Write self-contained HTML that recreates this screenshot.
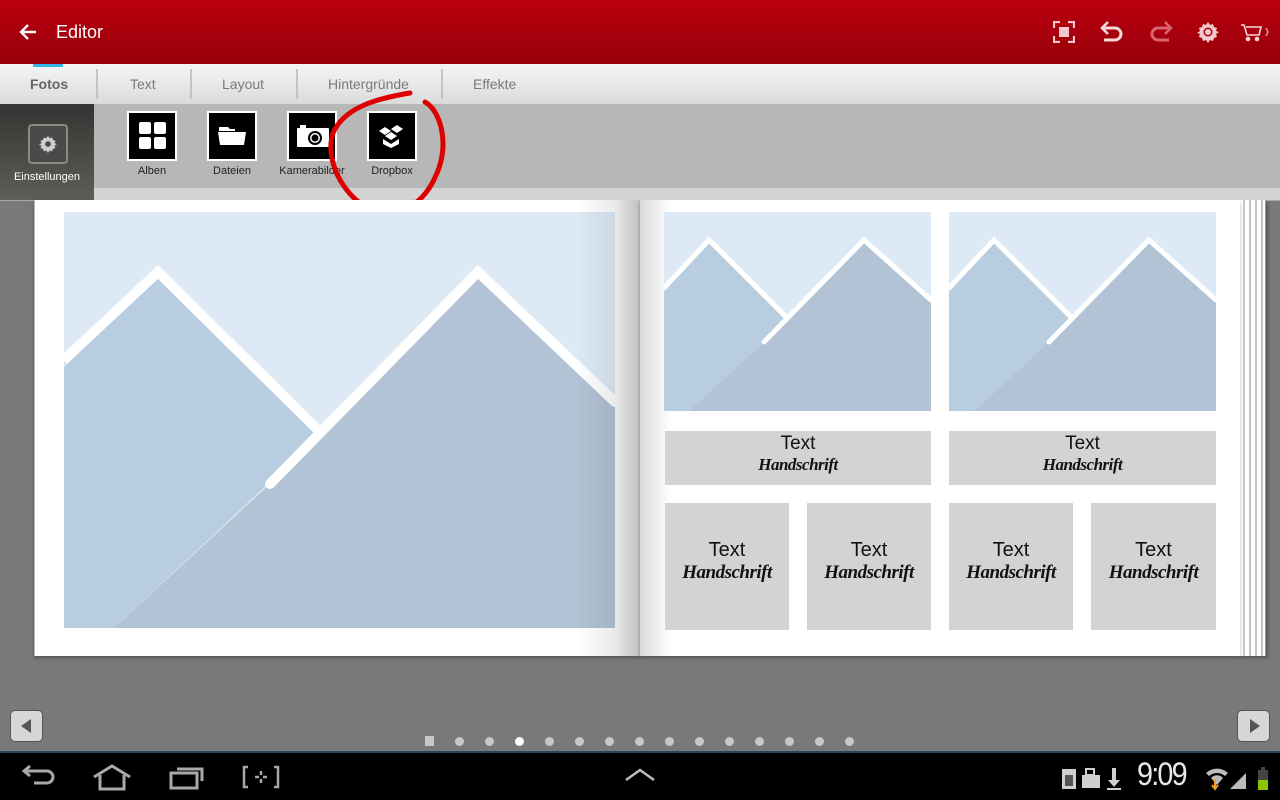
<!DOCTYPE html>
<html><head><meta charset="utf-8"><style>
*{margin:0;padding:0;box-sizing:border-box}
body{width:1280px;height:800px;overflow:hidden;background:#797979;font-family:"Liberation Sans",sans-serif;position:relative}
.abs{position:absolute}
#hdr{left:0;top:0;width:1280px;height:64px;background:linear-gradient(#bb0010,#960008)}
#tabs{left:0;top:64px;width:1280px;height:40px;background:linear-gradient(#f4f5f5,#dadbdb)}
.tab{position:absolute;top:12px;font-size:14px;color:#7a7a7a}
.sep{position:absolute;top:5px;width:2px;height:30px;background:#c4c4c4}
#tool{left:0;top:104px;width:1280px;height:84px;background:#b7b7b7}
#strip{left:0;top:188px;width:1280px;height:13px;background:#d3d3d3;border-bottom:1px solid #a9a9a9}
.ib{position:absolute;top:111px;width:50px;height:50px;background:#000;border:2px solid #fff}
.il{position:absolute;top:165px;font-size:11px;color:#222;text-align:center;width:90px}
.page{background:#fff}
.tb{position:absolute;background:#d3d3d3;text-align:center;color:#111}
.t{font-size:20px}
.h{font-family:"Liberation Serif",serif;font-style:italic;font-weight:bold;font-size:19px;letter-spacing:-0.5px}
.dot{position:absolute;top:737px;width:9px;height:9px;border-radius:50%;background:#c8c8c8}
</style></head><body>
<div id="hdr" class="abs">
<svg class="abs" style="left:18px;top:22px" width="20" height="20" viewBox="0 0 20 20"><path d="M18 10H3M10 3L3 10l7 7" stroke="#fff" stroke-width="2.4" fill="none"/></svg>
<div class="abs" style="left:56px;top:22px;color:#fff;font-size:18px">Editor</div>
<svg class="abs" style="left:1053px;top:21px" width="22" height="22" viewBox="0 0 22 22" fill="none" stroke="#f2c8cc" stroke-width="2.2"><path d="M1 7V1h6M15 1h6v6M21 15v6h-6M7 21H1v-6"/><rect x="6" y="6" width="10" height="10" fill="#f2c8cc" stroke="none"/></svg>
<svg class="abs" style="left:1099px;top:21px" width="26" height="22" viewBox="0 0 26 22" fill="none" stroke="#f4d8da" stroke-width="3"><path d="M4 7h12a6 6 0 010 12H5"/><path d="M9 1L3 7l6 6" stroke-width="2.6"/></svg>
<svg class="abs" style="left:1148px;top:21px" width="26" height="22" viewBox="0 0 26 22" fill="none" stroke="#d8646e" stroke-width="3"><path d="M22 7H10a6 6 0 000 12h11"/><path d="M17 1l6 6-6 6" stroke-width="2.6"/></svg>
<svg class="abs" style="left:1197px;top:21px" width="22" height="22" viewBox="0 0 22 22"><path d="M11 1l2 3 3-1 1 3 3 1-1 3 3 1-3 2 1 3-3 1-1 3-3-1-2 3-2-3-3 1-1-3-3-1 1-3-3-1 3-2-1-3 3-1 1-3 3 1z" fill="#f2c8cc"/><circle cx="11" cy="11" r="4.5" fill="#a8000c"/><circle cx="11" cy="11" r="3" fill="#f2c8cc"/></svg>
<svg class="abs" style="left:1240px;top:23px" width="30" height="20" viewBox="0 0 30 20" fill="none" stroke="#f4d8da" stroke-width="1.6"><path d="M1 2h3l3 10h12l2-8H6"/><circle cx="8" cy="16" r="1.5" fill="#f4d8da"/><circle cx="17" cy="16" r="1.5" fill="#f4d8da"/><path d="M26 5l2 4-2 4" stroke="#d88890"/></svg>
</div>
<div id="tabs" class="abs">
<div class="abs" style="left:33px;top:0;width:30px;height:3px;background:#33b5e5"></div>
<div class="tab" style="left:30px;font-weight:bold;color:#666">Fotos</div>
<div class="sep" style="left:96px"></div>
<div class="tab" style="left:130px">Text</div>
<div class="sep" style="left:190px"></div>
<div class="tab" style="left:222px">Layout</div>
<div class="sep" style="left:296px"></div>
<div class="tab" style="left:328px">Hintergründe</div>
<div class="sep" style="left:441px"></div>
<div class="tab" style="left:473px">Effekte</div>
</div>
<div id="tool" class="abs"></div>
<div id="strip" class="abs"></div>
<div class="abs" style="left:0;top:104px;width:94px;height:96px;background:linear-gradient(#343432,#5e5d59)">
<div class="abs" style="left:28px;top:20px;width:40px;height:40px;border:2px solid #8a8a86;border-radius:4px;background:#4a4a48"></div>
<svg class="abs" style="left:39px;top:31px" width="18" height="18" viewBox="0 0 22 22"><path d="M11 1l2 3 3-1 1 3 3 1-1 3 3 1-3 2 1 3-3 1-1 3-3-1-2 3-2-3-3 1-1-3-3-1 1-3-3-1 3-2-1-3 3-1 1-3 3 1z" fill="#cfcfcf"/><circle cx="11" cy="11" r="3.5" fill="#4a4a48"/></svg>
<div class="abs" style="left:0;top:67px;width:94px;text-align:center;color:#fff;font-size:11px">Einstellungen</div>
</div>
<div class="ib" style="left:127px"><svg width="46" height="46"><rect x="10" y="9" width="12" height="12" rx="2" fill="#fff"/><rect x="25" y="9" width="12" height="12" rx="2" fill="#fff"/><rect x="10" y="24" width="12" height="12" rx="2" fill="#fff"/><rect x="25" y="24" width="12" height="12" rx="2" fill="#fff"/></svg></div>
<div class="il" style="left:107px">Alben</div>
<div class="ib" style="left:207px"><svg width="46" height="46"><path d="M10 14h9l2 2h5v2H10z" fill="#fff"/><path d="M9 19h28l-2 13H11z" fill="#fff"/></svg></div>
<div class="il" style="left:187px">Dateien</div>
<div class="ib" style="left:287px"><svg width="46" height="46"><rect x="8" y="15" width="32" height="19" rx="1" fill="#fff"/><rect x="11" y="12" width="6" height="3" fill="#fff"/><circle cx="26" cy="25" r="7" fill="#000"/><circle cx="26" cy="25" r="5" fill="#fff"/><circle cx="26" cy="25" r="3.5" fill="#000"/></svg></div>
<div class="il" style="left:267px">Kamerabilder</div>
<div class="ib" style="left:367px"><svg width="46" height="46" fill="#fff"><path d="M16 14l6 4-6 4-6-4z"/><path d="M28 12l6 4-6 4-6-4z"/><path d="M16 23l6-4 6 4-6 4z"/><path d="M14 26l8 5 8-5v5l-8 4-8-4z"/></svg></div>
<div class="il" style="left:347px">Dropbox</div>
<svg class="abs" style="left:325px;top:88px" width="125" height="130" viewBox="0 0 125 130"><path d="M85 5C55 10 20 18 8 45C0 70 15 105 45 122C75 132 100 115 112 85C125 55 115 22 100 14" fill="none" stroke="#dd0000" stroke-width="5" stroke-linecap="round"/></svg>

<!-- book -->
<div class="abs" style="left:1238px;top:200px;width:28px;height:456px;background:#fff;border-right:1px solid #999;box-shadow:2px 2px 3px rgba(0,0,0,.3)">
<div class="abs" style="left:5px;top:0;width:2px;height:100%;background:#c4c4c4"></div><div class="abs" style="left:11px;top:0;width:2px;height:100%;background:#c4c4c4"></div><div class="abs" style="left:17px;top:0;width:2px;height:100%;background:#c4c4c4"></div><div class="abs" style="left:23px;top:0;width:2px;height:100%;background:#c4c4c4"></div></div>
<div class="abs page" style="left:34px;top:200px;width:606px;height:456px;border-left:1px solid #bbb;box-shadow:0 2px 3px rgba(0,0,0,.3)"></div>
<div class="abs page" style="left:640px;top:200px;width:600px;height:456px;box-shadow:0 2px 3px rgba(0,0,0,.3)"></div>
<svg class="abs" style="left:64px;top:212px" width="551" height="416" viewBox="0 0 551 416">
<rect width="551" height="416" fill="#ddeaf5"/>
<polygon points="0,155 94,60 254,220 206,270 50,416 0,416" fill="#b8cde0"/>
<polygon points="254,220 414,60 551,190 551,416 50,416 206,272" fill="#b2c3d5"/>
<path d="M0,148 L94,60 L254,218" stroke="#fff" stroke-width="10" fill="none"/>
<path d="M206,272 L414,60 L551,190" stroke="#fff" stroke-width="10" fill="none" stroke-linecap="round"/>
</svg>
<div class="abs" style="left:575px;top:200px;width:65px;height:456px;background:linear-gradient(90deg,rgba(0,0,0,0),rgba(0,0,0,.08) 60%,rgba(0,0,0,.25))"></div>
<div class="abs" style="left:640px;top:200px;width:30px;height:456px;background:linear-gradient(90deg,rgba(0,0,0,.15),rgba(0,0,0,0))"></div>
<svg class="abs" style="left:664px;top:212px" width="267" height="199" viewBox="0 0 267 199">
<rect width="267" height="199" fill="#ddeaf5"/>
<polygon points="0,80 45,28 123,104 100,130 25,199 0,199" fill="#b8cde0"/>
<polygon points="123,104 200,28 267,88 267,199 25,199 100,130" fill="#b2c3d5"/>
<path d="M0,76 L45,28 L123,106" stroke="#fff" stroke-width="5" fill="none"/>
<path d="M100,130 L200,28 L267,88" stroke="#fff" stroke-width="5" fill="none" stroke-linecap="round"/>
</svg>
<svg class="abs" style="left:949px;top:212px" width="267" height="199" viewBox="0 0 267 199">
<rect width="267" height="199" fill="#ddeaf5"/>
<polygon points="0,80 45,28 123,104 100,130 25,199 0,199" fill="#b8cde0"/>
<polygon points="123,104 200,28 267,88 267,199 25,199 100,130" fill="#b2c3d5"/>
<path d="M0,76 L45,28 L123,106" stroke="#fff" stroke-width="5" fill="none"/>
<path d="M100,130 L200,28 L267,88" stroke="#fff" stroke-width="5" fill="none" stroke-linecap="round"/>
</svg>
<div class="tb" style="left:665px;top:431px;width:266px;height:54px"><div class="t" style="margin-top:2px;font-size:19px">Text</div><div class="h" style="font-size:17px">Handschrift</div></div>
<div class="tb" style="left:949px;top:431px;width:267px;height:54px"><div class="t" style="margin-top:2px;font-size:19px">Text</div><div class="h" style="font-size:17px">Handschrift</div></div>
<div class="tb" style="left:665px;top:503px;width:124px;height:127px"><div class="t" style="margin-top:36px">Text</div><div class="h">Handschrift</div></div>
<div class="tb" style="left:807px;top:503px;width:124px;height:127px"><div class="t" style="margin-top:36px">Text</div><div class="h">Handschrift</div></div>
<div class="tb" style="left:949px;top:503px;width:124px;height:127px"><div class="t" style="margin-top:36px">Text</div><div class="h">Handschrift</div></div>
<div class="tb" style="left:1091px;top:503px;width:125px;height:127px"><div class="t" style="margin-top:36px">Text</div><div class="h">Handschrift</div></div>

<div class="abs" style="left:10px;top:710px;width:33px;height:32px;background:#d6d6d6;border:1px solid #555;border-radius:5px"><svg width="31" height="30"><path d="M20 8L10 15l10 7z" fill="#555"/></svg></div>
<div class="abs" style="left:1237px;top:710px;width:33px;height:32px;background:#d6d6d6;border:1px solid #555;border-radius:5px"><svg width="31" height="30"><path d="M12 8l10 7-10 7z" fill="#555"/></svg></div>
<div class="abs" style="left:425px;top:736px;width:9px;height:10px;background:#c8c8c8"></div>
<div class="dot" style="left:455px"></div><div class="dot" style="left:485px"></div><div class="dot" style="left:515px;background:#fff"></div><div class="dot" style="left:545px"></div><div class="dot" style="left:575px"></div><div class="dot" style="left:605px"></div><div class="dot" style="left:635px"></div><div class="dot" style="left:665px"></div><div class="dot" style="left:695px"></div><div class="dot" style="left:725px"></div><div class="dot" style="left:755px"></div><div class="dot" style="left:785px"></div><div class="dot" style="left:815px"></div><div class="dot" style="left:845px"></div>

<div class="abs" style="left:0;top:751px;width:1280px;height:2px;background:#244a55"></div>
<div class="abs" style="left:0;top:753px;width:1280px;height:47px;background:#000">
<svg class="abs" style="left:20px;top:10px" width="260" height="30" fill="none" stroke="#a8a8a8" stroke-width="3">
<path d="M6 8h21a6 6 0 010 12H14"/><path d="M10 3L4 8l6 5" />
<path d="M74 14L92 3l18 11M80 12v14h24V12"/>
<rect x="151" y="10" width="26" height="15"/><path d="M157 6h25v12"/>
<path d="M228 4h-4v20h4M254 4h4v20h-4M241 8v4M241 16v4M235 14h4M243 14h4" stroke-width="2.5"/>
</svg>
<svg class="abs" style="left:624px;top:14px" width="32" height="16"><path d="M2 13L16 3l14 10" stroke="#bbb" stroke-width="2.5" fill="none"/></svg>
<svg class="abs" style="left:1060px;top:12px" width="72" height="26" fill="#cfcfcf"><rect x="2" y="4" width="14" height="20"/><rect x="5" y="10" width="8" height="11" fill="#555"/><rect x="22" y="10" width="18" height="13"/><rect x="26" y="4" width="8" height="6" fill="none" stroke="#cfcfcf" stroke-width="2"/><path d="M52 3h4v12h4l-6 7-6-7h4zM47 23h14v2H47z"/></svg>
<div class="abs" style="left:1137px;top:3px;color:#e8e8e8;font-size:32px;letter-spacing:-2px;transform:scaleX(0.9);transform-origin:left">9:09</div>
<svg class="abs" style="left:1202px;top:12px" width="72" height="26"><path d="M4 8a16 16 0 0122 0l-3 3a12 12 0 00-16 0z" fill="#bbb"/><path d="M9 13a8 8 0 0112 0l-6 7z" fill="#bbb"/><path d="M13 14v10M10 20l3 4 3-4" stroke="#f5a020" stroke-width="2" fill="none"/><path d="M28 24L44 8v16z" fill="#bbb"/><rect x="56" y="5" width="10" height="20" fill="#444"/><rect x="56" y="15" width="10" height="10" fill="#8bc400"/><rect x="59" y="2" width="4" height="3" fill="#444"/></svg>
</div>
</body></html>
